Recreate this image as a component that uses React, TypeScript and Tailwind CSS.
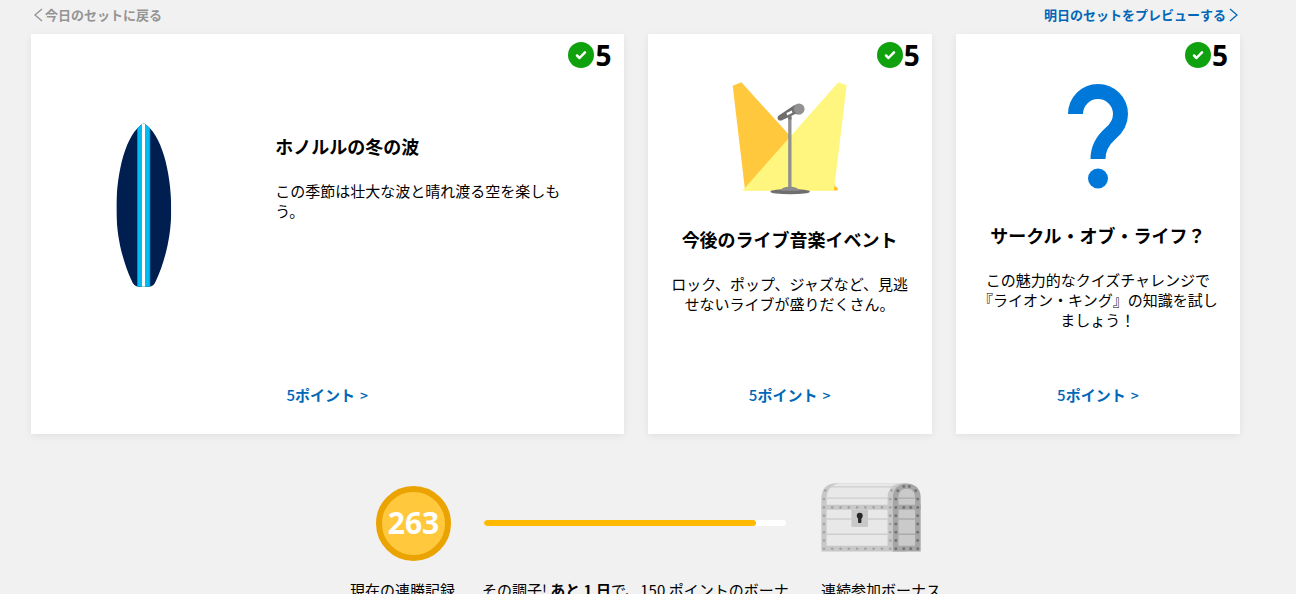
import type { ReactNode } from "react";

interface OfferCardProps {
  title: string;
  description: string;
  points: number;
  art: ReactNode;
  wide?: boolean;
}

function Surfboard() {
  return (
    <svg viewBox="78 38 168 493" className="w-14 h-[164px]" aria-hidden="true">
      <defs>
        <clipPath id="board">
          <path d="M161 39 C108 68 79 185 79 298 C79 388 102 462 124 510 Q131 530 146 530 H178 Q192 530 199 510 C221 462 244 388 244 298 C244 185 214 68 161 39Z" />
        </clipPath>
      </defs>
      <g clipPath="url(#board)">
        <rect x="78" y="38" width="168" height="493" fill="#001e50" />
        <rect x="141" y="38" width="40" height="493" fill="#0074b0" />
        <rect x="143" y="38" width="36" height="493" fill="#00bcf2" />
        <rect x="156" y="38" width="9" height="493" fill="#fff" />
      </g>
    </svg>
  );
}

function Microphone() {
  return (
    <svg viewBox="94 38 344 338" className="w-[115px] h-[113px]" aria-hidden="true">
      <path d="M96 49 L122 39 L410 356 V362 H133Z" fill="#ffc83d" />
      <path d="M399 350 L410 362 H398Z" fill="#ffb900" />
      <path d="M412 39 L437 48 L399 363 H125Z" fill="#fff67f" />
      <ellipse cx="268" cy="366" rx="59" ry="8" fill="#6e6e6e" />
      <path d="M240 363 C240 355 254 351 267 351 C280 351 294 355 294 363Z" fill="#8c8c8c" />
      <rect x="262" y="138" width="10" height="215" fill="#919191" />
      <path d="M262 142 h10 v8 h-10z" fill="#777" />
      <path d="M234 138 L281 107 L291 130 L242 153 C232 156 226 145 234 138Z" fill="#6e6e6e" />
      <path d="M257 131 L273 123 L275 130 L259 138Z" fill="#fff" />
      <circle cx="294" cy="119" r="17" fill="#919191" />
      <path d="M281 108 C276 116 278 126 287 134" stroke="#777" strokeWidth="3" fill="none" />
    </svg>
  );
}

function QuestionMark() {
  return (
    <svg viewBox="0 -2 60 109" className="w-[60px] h-[109px]" aria-hidden="true">
      <path
        d="M7.5 30 A22.5 22.5 0 0 1 52.5 30 C52.5 38.5 49 44 42.5 49.500 C34.500 56.500 30 64 30 75"
        fill="none"
        stroke="#0078d9"
        strokeWidth="15"
      />
      <circle cx="30" cy="94.500" r="10" fill="#0078d9" />
    </svg>
  );
}

const frontRivets = [
  [71, 87], [71, 112], [71, 137], [71, 162], [71, 187], [71, 212], [71, 237], [75, 61],
  [96, 112], [121, 112], [146, 112], [171, 112], [196, 112], [221, 112], [246, 112],
  [96, 237], [121, 237], [146, 237], [171, 237], [196, 237], [221, 237], [246, 237],
  [271, 87], [271, 112], [271, 137], [271, 162], [271, 187], [271, 212], [271, 237], [275, 61],
];

const sideRivets = [
  [288, 87], [288, 112], [288, 137], [288, 162], [288, 187], [288, 212], [288, 237],
  [312, 112], [333, 112], [312, 237], [333, 237],
  [354, 87], [354, 112], [354, 137], [354, 162], [354, 187], [354, 212], [354, 237],
  [294, 62], [312, 49], [329, 49], [348, 62],
];

function TreasureChest() {
  return (
    <svg viewBox="62 39 302 207" className="w-[100px] h-[69px]" aria-hidden="true">
      <path d="M63 245 V84 C63 56 80 39 108 39 H320 V245Z" fill="#c8c8c8" />
      <path d="M79 228 V84 C79 60 92 45 116 39 H306 C278 40 263 58 263 84 V228Z" fill="#e8e8e8" />
      <path d="M88 50 H284 M79 84 H263 M79 147 H263 M79 193 H263" stroke="#cdcdcd" strokeWidth="4" />
      <rect x="63" y="104" width="217" height="15" fill="#c8c8c8" />
      <path d="M279 245 V82 C279 56 296 40 321 40 C346 40 363 56 363 82 V245Z" fill="#a6a6a6" />
      <path d="M296 228 V84 C296 66 305 56 321 56 C337 56 346 66 346 84 V228Z" fill="#cacaca" />
      <path d="M296 84 H346 M296 147 H346 M296 193 H346" stroke="#aaa" strokeWidth="4" />
      <rect x="279" y="104" width="84" height="15" fill="#a6a6a6" />
      {frontRivets.map(([x, y]) => (
        <circle key={`${x}-${y}`} cx={x} cy={y} r="4" fill="#a3a3a3" />
      ))}
      {sideRivets.map(([x, y]) => (
        <circle key={`${x}-${y}`} cx={x} cy={y} r="4.500" fill="#737373" />
      ))}
      <rect x="154" y="119" width="50" height="52" fill="#c8c8c8" />
      <circle cx="179" cy="137" r="9" fill="#262626" />
      <rect x="174" y="140" width="10" height="19" rx="2" fill="#262626" />
    </svg>
  );
}

function PointsBadge({ points }: { points: number }) {
  return (
    <div className="absolute top-2 right-3 flex items-center gap-px">
      <svg viewBox="0 0 26 26" className="size-[26px]" aria-hidden="true">
        <circle cx="13" cy="13" r="13" fill="#10a10e" />
        <path
          d="M9 13.500 L11.500 16 L17 10.300"
          fill="none"
          stroke="#fff"
          strokeWidth="2.500"
          strokeLinecap="round"
          strokeLinejoin="round"
        />
      </svg>
      <span className="font-['Noto_Sans',sans-serif] text-[28px] leading-[26px] font-bold">{points}</span>
    </div>
  );
}

function OfferCard({ title, description, points, art, wide = false }: OfferCardProps) {
  return (
    <article
      className={`relative flex min-h-[400px] flex-col bg-white shadow-[0_2px_8px_rgba(0,0,0,0.07)] ${
        wide ? "col-span-2" : ""
      }`}
    >
      <PointsBadge points={points} />
      {wide ? (
        <div className="flex">
          <div className="flex w-[38%] justify-center pt-[89px]">{art}</div>
          <div className="flex-1 pt-[100px] pr-[50px] pl-[19px]">
            <h3 className="text-[18px] leading-6 font-bold">{title}</h3>
            <p className="mt-[23px] text-[15px] leading-5">{description}</p>
          </div>
        </div>
      ) : (
        <div className="flex flex-col items-center px-5 pt-12 text-center">
          {art}
          <h3 className="mt-8 text-[18px] leading-6 font-bold whitespace-nowrap">{title}</h3>
          <p className="mt-[23px] text-[15px] leading-5">{description}</p>
        </div>
      )}
      <a
        href="#"
        className="mt-auto mb-[29px] self-center text-[15px] leading-5 font-bold text-[#0067b8]"
      >
        <span className="font-medium">{points}</span>ポイント
        <span className="ml-[5px] text-sm font-medium">&gt;</span>
      </a>
    </article>
  );
}

export default function App() {
  return (
    <div
      lang="ja"
      className="min-h-screen bg-[#f1f1f1] font-['Noto_Sans_CJK_JP',sans-serif] text-black"
    >
      <main>
        <nav className="flex justify-between pt-[5px] pr-[58px] pl-[34px] text-[13px] leading-5 font-bold">
          <a href="#" className="flex items-center gap-[2px] text-[#949494]">
            <svg viewBox="0 0 9 14" className="h-3.5 w-[9px]" fill="none" stroke="currentColor" strokeWidth="1.300" aria-hidden="true">
              <path d="M8 1 L1 7 L8 13" />
            </svg>
            今日のセットに戻る
          </a>
          <a href="#" className="flex items-center gap-[3px] text-[#0067b8]">
            明日のセットをプレビューする
            <svg viewBox="0 0 9 14" className="h-3.5 w-[9px]" fill="none" stroke="currentColor" strokeWidth="1.300" aria-hidden="true">
              <path d="M1 1 L8 7 L1 13" />
            </svg>
          </a>
        </nav>

        {/* Daily set */}
        <section className="mt-[9px] mr-14 ml-[31px] grid grid-cols-4 gap-6">
          <OfferCard
            wide
            title="ホノルルの冬の波"
            description="この季節は壮大な波と晴れ渡る空を楽しもう。"
            points={5}
            art={<Surfboard />}
          />
          <OfferCard
            title="今後のライブ音楽イベント"
            description="ロック、ポップ、ジャズなど、見逃せないライブが盛りだくさん。"
            points={5}
            art={<Microphone />}
          />
          <OfferCard
            title="サークル・オブ・ライフ？"
            description="この魅力的なクイズチャレンジで『ライオン・キング』の知識を試しましょう！"
            points={5}
            art={<QuestionMark />}
          />
        </section>

        {/* Streak */}
        <section className="mt-[49px] grid grid-cols-[107px_314px_125px] justify-center gap-x-[25px] text-[15px] leading-5">
          <div className="flex h-20 items-center justify-end pr-[6px]">
            <div className="flex size-[75px] items-center justify-center rounded-full border-[6px] border-[#eaa300] bg-[#ffc83d] font-['Noto_Sans',sans-serif] text-[30px] font-bold text-white">
              263
            </div>
          </div>
          <div className="flex h-20 items-center pr-[10px] pl-[2px]">
            <div
              role="progressbar"
              aria-label="連続参加ボーナス"
              aria-valuenow={90}
              className="h-1.5 w-full overflow-hidden rounded-full bg-white"
            >
              <div className="h-full w-[90%] rounded-full bg-[#ffb900]" />
            </div>
          </div>
          <TreasureChest />

          <p className="mt-[17px] whitespace-nowrap">現在の連勝記録</p>
          <p className="mt-[17px] whitespace-nowrap">
            その調子! <b>あと 1 日</b>で、150 ポイントのボーナ
          </p>
          <p className="mt-[17px] whitespace-nowrap">連続参加ボーナス</p>
        </section>
      </main>
    </div>
  );
}
